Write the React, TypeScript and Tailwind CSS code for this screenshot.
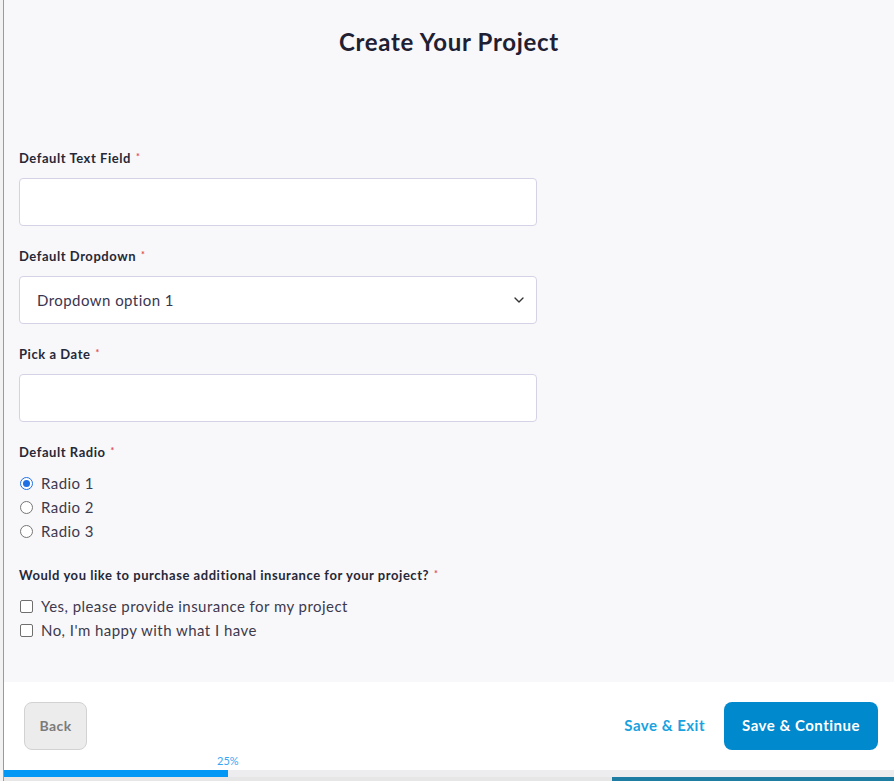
import { ChevronDown } from 'lucide-react';

const font = { fontFamily: 'Lato, "Open Sans", sans-serif' };

function Label({ children }: { children: React.ReactNode }) {
  return (
    <div className="flex items-center gap-[5px] text-[13px] font-bold tracking-[0.55px] text-[#262837] leading-[16px]">
      <span>{children}</span>
      <span className="mb-[3px] text-[9px] text-[#e04b4b] leading-[10px]">*</span>
    </div>
  );
}

function TextBox() {
  return <div className="h-[48px] w-[518px] rounded-[4px] border border-[#d5d2e6] bg-white" />;
}

function Radio({ label, checked }: { label: string; checked?: boolean }) {
  return (
    <div className="flex h-[24px] items-center gap-[8px]">
      <span
        className={
          checked
            ? 'flex h-[13px] w-[13px] items-center justify-center rounded-full border border-[#1f6fe5] bg-white'
            : 'h-[13px] w-[13px] rounded-full border border-[#767676] bg-white'
        }
      >
        {checked && <span className="h-[7px] w-[7px] rounded-full bg-[#1f6fe5]" />}
      </span>
      <span className="text-[15px] tracking-[0.45px] text-[#3d3a4d]">{label}</span>
    </div>
  );
}

function Check({ label }: { label: string }) {
  return (
    <div className="flex h-[24px] items-center gap-[8px]">
      <span className="h-[13px] w-[13px] rounded-[2px] border border-[#6f6f6f] bg-white" />
      <span className="text-[15px] tracking-[0.45px] text-[#3d3a4d]">{label}</span>
    </div>
  );
}

export default function App() {
  return (
    <div className="flex h-[781px] w-[894px] overflow-hidden bg-[#ececec]" style={font}>
      <div className="w-[4px] shrink-0 border-r border-[#9b9b9b] bg-[#f2f2f2]" />
      <div className="flex flex-1 flex-col">
        <div className="flex h-[777px] flex-col bg-[#f8f8fb]">
          <h1 className="pt-[27px] text-center text-[24px] font-bold tracking-[0.7px] leading-[30px] text-[#1f2133]">
            Create Your Project
          </h1>

          <div className="flex flex-col px-[15px] pt-[93px]">
            <Label>Default Text Field</Label>
            <div className="mt-[12px]">
              <TextBox />
            </div>

            <div className="mt-[22px]">
              <Label>Default Dropdown</Label>
            </div>
            <div className="mt-[12px] flex h-[48px] w-[518px] items-center justify-between rounded-[4px] border border-[#d5d2e6] bg-white pl-[17px] pr-[9px]">
              <span className="text-[15px] tracking-[0.45px] text-[#3a3550]">Dropdown option 1</span>
              <ChevronDown className="h-[16px] w-[16px] text-[#333]" strokeWidth={2} />
            </div>

            <div className="mt-[22px]">
              <Label>Pick a Date</Label>
            </div>
            <div className="mt-[12px]">
              <TextBox />
            </div>

            <div className="mt-[22px]">
              <Label>Default Radio</Label>
            </div>
            <div className="mt-[11px] flex flex-col pl-[1px]">
              <Radio label="Radio 1" checked />
              <Radio label="Radio 2" />
              <Radio label="Radio 3" />
            </div>

            <div className="mt-[24px]">
              <Label>Would you like to purchase additional insurance for your project?</Label>
            </div>
            <div className="mt-[11px] flex flex-col pl-[1px]">
              <Check label="Yes, please provide insurance for my project" />
              <Check label="No, I'm happy with what I have" />
            </div>
          </div>

          <div className="mt-auto bg-white">
            <div className="flex h-[88px] items-start justify-between pl-[20px] pr-[16px] pt-[20px]">
              <button className="h-[48px] w-[63px] rounded-[8px] border border-[#d2d2d2] bg-[#ececec] pb-[2px] text-[14px] font-bold tracking-[0.4px] text-[#7b7b7b]">
                Back
              </button>
              <div className="flex items-center gap-[19px]">
                <span className="pb-[2px] text-[15px] font-bold tracking-[0.5px] text-[#18a2e0]">Save &amp; Exit</span>
                <button className="h-[48px] w-[154px] rounded-[8px] bg-[#0089cc] pb-[2px] text-[15px] font-bold tracking-[0.5px] text-white">
                  Save &amp; Continue
                </button>
              </div>
            </div>
            <div className="relative h-[7px] bg-[#ededf0]">
              <div className="h-full w-[224px] bg-[#0097f5]" />
              <span className="absolute bottom-[10px] left-[213px] text-[11px] leading-[12px] text-[#3aa6f3]">
                25%
              </span>
            </div>
          </div>
        </div>
        <div className="flex h-[4px]">
          <div className="w-[608px] bg-[#e6e6e6]" />
          <div className="flex-1 bg-[#1e7da3]" />
        </div>
      </div>
    </div>
  );
}
